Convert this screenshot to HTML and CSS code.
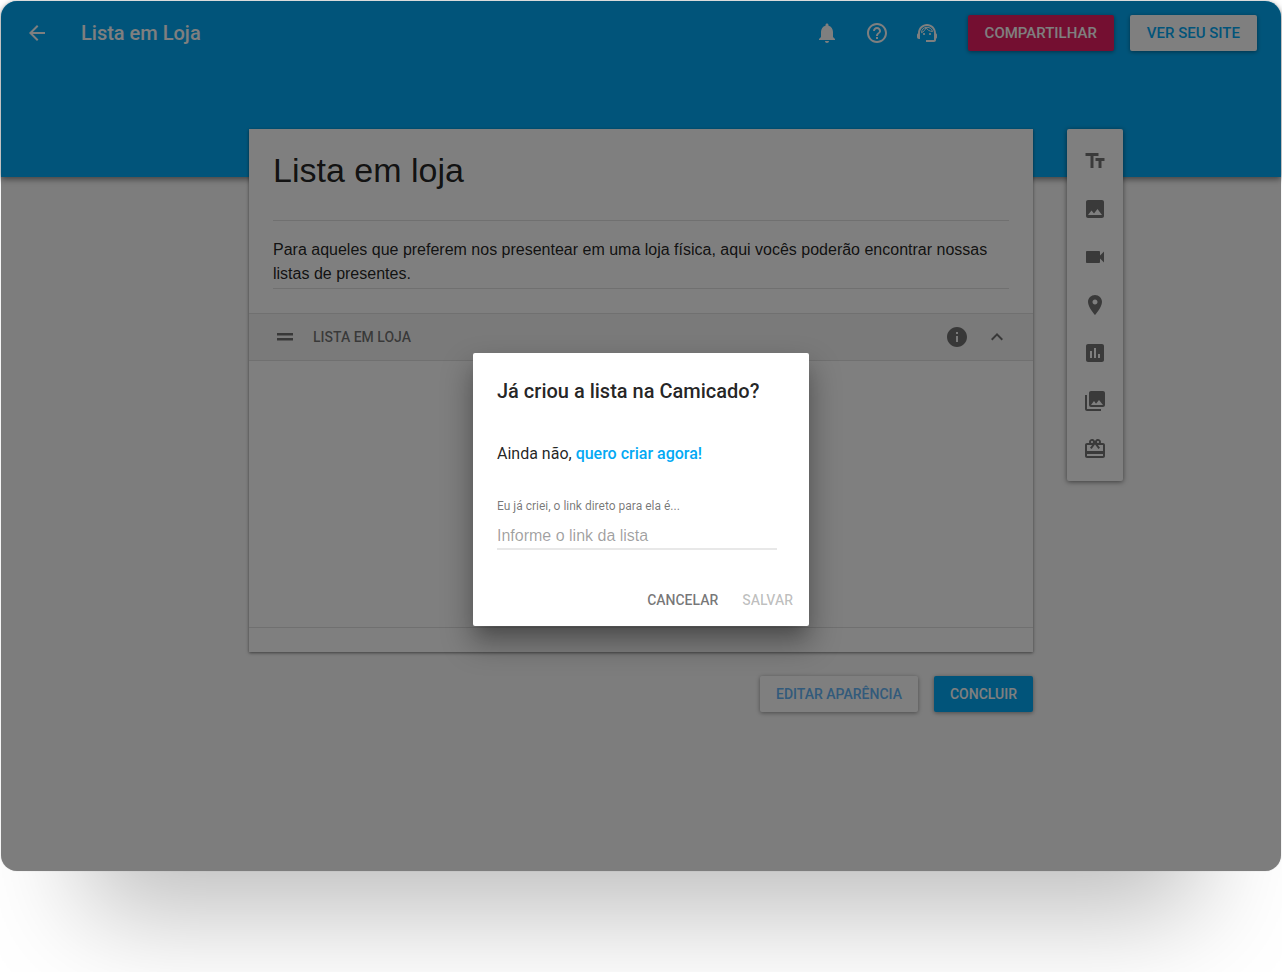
FILE: index.html
```
<!DOCTYPE html>
<html lang="pt-BR">
<head>
    <meta charset="UTF-8">
    <meta name="viewport" content="width=device-width, initial-scale=1.0">
    <title>Lista em Loja</title>
    <link rel="stylesheet" href="styles.css">
</head>
<body>

    <div class="screen">
        <header class="header">
            <div class="topbar">
                <button class="icon-button" aria-label="Voltar">
                    <svg viewBox="0 0 24 24"><path d="M20 11H7.83l5.59-5.59L12 4l-8 8 8 8 1.41-1.41L7.83 13H20v-2z"/></svg>
                </button>
                <h1 class="topbar-title">Lista em Loja</h1>
                <div class="topbar-icons">
                    <button class="icon-button" aria-label="Notificações">
                        <svg viewBox="0 0 24 24"><path d="M12 22c1.1 0 2-.9 2-2h-4c0 1.1.89 2 2 2zm6-6v-5c0-3.07-1.64-5.64-4.5-6.32V4c0-.83-.67-1.5-1.5-1.5s-1.5.67-1.5 1.5v.68C7.63 5.36 6 7.92 6 11v5l-2 2v1h16v-1l-2-2z"/></svg>
                    </button>
                    <button class="icon-button" aria-label="Ajuda">
                        <svg viewBox="0 0 24 24"><path d="M11 18h2v-2h-2v2zm1-16C6.48 2 2 6.48 2 12s4.48 10 10 10 10-4.48 10-10S17.52 2 12 2zm0 18c-4.41 0-8-3.59-8-8s3.59-8 8-8 8 3.59 8 8-3.59 8-8 8zm0-14c-2.21 0-4 1.79-4 4h2c0-1.1.9-2 2-2s2 .9 2 2c0 2-3 1.75-3 5h2c0-2.25 3-2.5 3-5 0-2.21-1.79-4-4-4z"/></svg>
                    </button>
                    <button class="icon-button" aria-label="Atendimento">
                        <svg viewBox="0 0 24 24"><path d="M21 12.22C21 6.73 16.74 3 12 3c-4.69 0-9 3.65-9 9.28-.6.34-1 .98-1 1.72v2c0 1.1.9 2 2 2h1v-6.1c0-3.87 3.13-7 7-7s7 3.13 7 7V19h-8v2h8c1.1 0 2-.9 2-2v-1.22c.59-.31 1-.92 1-1.64v-2.3c0-.7-.41-1.31-1-1.62z"/><circle cx="9" cy="13" r="1.1"/><circle cx="15" cy="13" r="1.1"/><path class="hair" d="M17.5 10.5C17 8 14.8 6.3 12 6.3c-3 0-5.6 2.2-5.5 5.4 2.2-1 3.9-2.800 4.500-5.200 1.200 2.400 3.600 3.900 6.500 4z"/></svg>
                    </button>
                </div>
                <button class="button button-large button-pink">COMPARTILHAR</button>
                <button class="button button-large button-white">VER SEU SITE</button>
            </div>
        </header>

        <main class="content">
            <section class="card">
                <div class="card-intro">
                    <input class="page-title" type="text" value="Lista em loja" aria-label="Título da página">
                    <textarea class="page-text" rows="2" spellcheck="false" aria-label="Texto da página">Para aqueles que preferem nos presentear em uma loja física, aqui vocês poderão encontrar nossas listas de presentes.</textarea>
                </div>
                <div class="block-header">
                    <svg viewBox="0 0 24 24"><path d="M4 8h16v2.500H4zM4 13h16v2.500H4z"/></svg>
                    <h2 class="block-title">LISTA EM LOJA</h2>
                    <button class="icon-button" aria-label="Informações">
                        <svg viewBox="0 0 24 24"><path d="M12 2C6.48 2 2 6.48 2 12s4.48 10 10 10 10-4.48 10-10S17.52 2 12 2zm1 15h-2v-6h2v6zm0-8h-2V7h2v2z"/></svg>
                    </button>
                    <button class="icon-button" aria-label="Recolher">
                        <svg viewBox="0 0 24 24"><path d="M12 8l-6 6 1.41 1.41L12 10.83l4.59 4.58L18 14z"/></svg>
                    </button>
                </div>
                <div class="block-body"></div>
                <div class="card-footer"></div>
            </section>

            <nav class="toolbox" aria-label="Adicionar bloco">
                <button class="tool" aria-label="Texto">
                    <svg viewBox="0 0 24 24"><path d="M2.5 4v3h5v12h3V7h5V4h-13zm19 5h-9v3h3v7h3v-7h3V9z"/></svg>
                </button>
                <button class="tool" aria-label="Imagem">
                    <svg viewBox="0 0 24 24"><path d="M21 19V5c0-1.1-.9-2-2-2H5c-1.1 0-2 .9-2 2v14c0 1.1.9 2 2 2h14c1.1 0 2-.9 2-2zM8.5 13.5l2.5 3.01L14.5 12l4.5 6H5l3.5-4.5z"/></svg>
                </button>
                <button class="tool" aria-label="Vídeo">
                    <svg viewBox="0 0 24 24"><path d="M17 10.5V7c0-.55-.45-1-1-1H4c-.55 0-1 .45-1 1v10c0 .55.45 1 1 1h12c.55 0 1-.45 1-1v-3.5l4 4v-11l-4 4z"/></svg>
                </button>
                <button class="tool" aria-label="Mapa">
                    <svg viewBox="0 0 24 24"><path d="M12 2C8.13 2 5 5.13 5 9c0 5.25 7 13 7 13s7-7.75 7-13c0-3.87-3.13-7-7-7zm0 9.5c-1.38 0-2.5-1.12-2.5-2.5s1.12-2.5 2.5-2.5 2.5 1.12 2.5 2.5-1.12 2.5-2.5 2.5z"/></svg>
                </button>
                <button class="tool" aria-label="Enquete">
                    <svg viewBox="0 0 24 24"><path d="M19 3H5c-1.1 0-2 .9-2 2v14c0 1.1.9 2 2 2h14c1.1 0 2-.9 2-2V5c0-1.1-.9-2-2-2zM9 17H7v-7h2v7zm4 0h-2V7h2v10zm4 0h-2v-4h2v4z"/></svg>
                </button>
                <button class="tool" aria-label="Galeria">
                    <svg viewBox="0 0 24 24"><path d="M22 16V4c0-1.1-.9-2-2-2H8c-1.1 0-2 .9-2 2v12c0 1.1.9 2 2 2h12c1.1 0 2-.9 2-2zm-11-4l2.03 2.71L16 11l4 5H8l3-4zM2 6v14c0 1.1.9 2 2 2h14v-2H4V6H2z"/></svg>
                </button>
                <button class="tool" aria-label="Presentes">
                    <svg viewBox="0 0 24 24"><path d="M20 6h-2.18c.11-.31.18-.65.18-1 0-1.66-1.34-3-3-3-1.05 0-1.96.54-2.5 1.35l-.5.67-.5-.68C10.96 2.54 10.05 2 9 2 7.34 2 6 3.34 6 5c0 .35.07.69.18 1H4c-1.11 0-1.99.89-1.99 2L2 19c0 1.11.89 2 2 2h16c1.11 0 2-.89 2-2V8c0-1.11-.89-2-2-2zm-5-2c.55 0 1 .45 1 1s-.45 1-1 1-1-.45-1-1 .45-1 1-1zM9 4c.55 0 1 .45 1 1s-.45 1-1 1-1-.45-1-1 .45-1 1-1zm11 15H4v-2h16v2zm0-5H4V8h5.08L7 10.83 8.62 12 11 8.76l1-1.36 1 1.36L15.38 12 17 10.83 14.92 8H20v6z"/></svg>
                </button>
            </nav>

            <div class="page-actions">
                <button class="button button-white button-outline">EDITAR APARÊNCIA</button>
                <button class="button button-blue">CONCLUIR</button>
            </div>
        </main>

        <div class="overlay">
            <form class="dialog" role="dialog" aria-labelledby="dialog-title">
                <h2 class="dialog-title" id="dialog-title">Já criou a lista na Camicado?</h2>
                <p class="dialog-text">Ainda não, <a href="#">quero criar agora!</a></p>
                <label class="dialog-label" for="link">Eu já criei, o link direto para ela é...</label>
                <input class="dialog-input" type="text" id="link" placeholder="Informe o link da lista">
                <div class="dialog-actions">
                    <button type="button" class="flat-button">CANCELAR</button>
                    <button type="submit" class="flat-button" disabled>SALVAR</button>
                </div>
            </form>
        </div>
    </div>

</body>
</html>
```
FILE: styles.css
```
* {
    box-sizing: border-box;
}

body {
    min-height: 100vh;
    margin: 0;
    padding: 1px 1px 101px;
    background-color: #fff;
    font-family: Roboto, sans-serif;
    color: rgba(0, 0, 0, 0.87);
}

h1, h2, p {
    margin: 0;
}

button {
    font-family: inherit;
    border: none;
    cursor: pointer;
}

svg {
    display: block;
    width: 24px;
    height: 24px;
    fill: currentColor;
}

.hair {
    fill: none;
    stroke: currentColor;
    stroke-width: 1;
}

.screen {
    position: relative;
    min-height: calc(100vh - 102px);
    border-radius: 16px;
    background-color: #fafafa;
    box-shadow: 0 0 1px rgba(0, 0, 0, 0.3), 0 126px 100px -84px rgba(0, 0, 0, 0.26);
}

/* Barra superior */
.header {
    height: 176px;
    border-radius: 16px 16px 0 0;
    background-color: #03a9f4;
    box-shadow: 0 2px 6px rgba(0, 0, 0, 0.5);
}

.topbar {
    display: flex;
    align-items: center;
    gap: 16px;
    height: 64px;
    padding: 0 24px;
    color: #fff;
}

.topbar-title {
    flex: 1;
    padding-left: 16px;
    font-size: 20px;
    font-weight: 500;
    line-height: 28px;
}

.topbar-icons {
    display: flex;
    gap: 26px;
    padding-right: 13px;
}

.icon-button {
    padding: 0;
    background: none;
    color: inherit;
}

.button {
    height: 36px;
    padding: 0 16px;
    border-radius: 2px;
    font-size: 14px;
    font-weight: 500;
    box-shadow: 0 1px 4px rgba(0, 0, 0, 0.4);
}

.button-large {
    padding: 0 17px;
    font-size: 15px;
}

.button-pink {
    background-color: #e91e63;
    color: #fff;
}

.button-white {
    background-color: #fff;
    color: #03a9f4;
}

.button-outline {
    color: #64b5f6;
}

.button-blue {
    background-color: #03a9f4;
    color: #fff;
}

/* Conteúdo */
.content {
    display: grid;
    grid-template-columns: 1fr minmax(0, 784px) 1fr;
    column-gap: 34px;
    row-gap: 24px;
    margin-top: -48px;
}

.card {
    grid-column: 2;
    background-color: #fff;
    box-shadow: 0 1px 3px rgba(0, 0, 0, 0.5);
}

.card-intro {
    padding: 20px 24px 24px;
}

.page-title,
.page-text {
    display: block;
    width: 100%;
    border: none;
    border-bottom: 1px solid #e0e0e0;
    background: none;
    color: inherit;
    font-family: "Liberation Sans", Arial, sans-serif;
    resize: none;
    outline: none;
}

.page-title {
    height: 72px;
    padding: 0 0 28px;
    font-size: 34px;
}

.page-text {
    margin-top: 16px;
    padding: 1px 0 2px;
    font-size: 16px;
    line-height: 24px;
    overflow: hidden;
}

.block-header {
    display: flex;
    align-items: center;
    gap: 16px;
    height: 48px;
    padding: 0 24px;
    border-top: 1px solid #e0e0e0;
    border-bottom: 1px solid #e0e0e0;
    background-color: #f5f5f5;
    color: rgba(0, 0, 0, 0.54);
}

.block-title {
    flex: 1;
    font-size: 14px;
    font-weight: 500;
}

.block-body {
    height: 267px;
    border-bottom: 1px solid #e0e0e0;
}

.card-footer {
    height: 24px;
}

.toolbox {
    grid-column: 3;
    justify-self: start;
    align-self: start;
    width: 56px;
    padding: 8px 0;
    border-radius: 2px;
    background-color: #fff;
    box-shadow: 0 1px 5px rgba(0, 0, 0, 0.5);
}

.tool {
    display: block;
    width: 100%;
    padding: 12px 16px;
    background: none;
    color: rgba(0, 0, 0, 0.54);
}

.page-actions {
    grid-column: 2;
    display: flex;
    justify-content: flex-end;
    gap: 16px;
}

/* Janela */
.overlay {
    position: absolute;
    inset: 0;
    display: flex;
    align-items: center;
    justify-content: center;
    padding-top: 107px;
    border-radius: 16px;
    background-color: rgba(0, 0, 0, 0.5);
}

.dialog {
    width: 336px;
    padding: 24px 8px 8px 24px;
    border-radius: 2px;
    background-color: #fff;
    box-shadow: 0 11px 15px -7px rgba(0, 0, 0, 0.2), 0 16px 30px 3px rgba(0, 0, 0, 0.3);
}

.dialog-title {
    font-size: 20px;
    font-weight: 500;
    line-height: 28px;
}

.dialog-text {
    margin: 37px 0 32px;
    font-size: 16px;
    line-height: 24px;
}

.dialog-text a {
    color: #03a9f4;
    font-weight: 500;
    text-decoration: none;
}

.dialog-label {
    display: block;
    font-size: 12px;
    line-height: 16px;
    color: rgba(0, 0, 0, 0.54);
}

.dialog-input {
    display: block;
    width: 280px;
    height: 28px;
    margin: 8px 0 32px;
    padding: 1px 0 0;
    border: none;
    border-bottom: 2px solid #e8e8e8;
    outline: none;
    font-family: "Liberation Sans", Arial, sans-serif;
    font-size: 16px;
}

.dialog-input::placeholder {
    color: rgba(0, 0, 0, 0.38);
}

.dialog-actions {
    display: flex;
    justify-content: flex-end;
    gap: 8px;
}

.flat-button {
    height: 36px;
    padding: 0 8px;
    background: none;
    color: rgba(0, 0, 0, 0.54);
    font-size: 14px;
    font-weight: 500;
}

.flat-button:disabled {
    color: rgba(0, 0, 0, 0.26);
    cursor: default;
}
```
